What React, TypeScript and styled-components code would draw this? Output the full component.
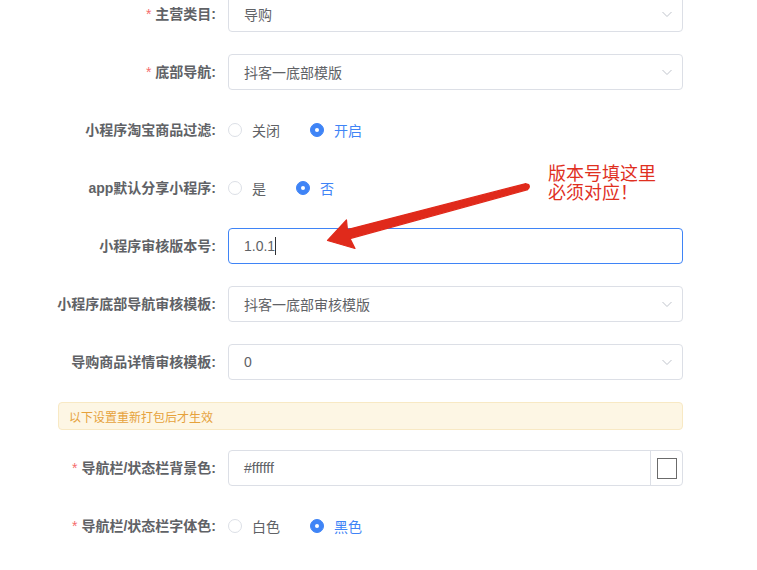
import React from "react";
import styled, { createGlobalStyle } from "styled-components";

const Global = createGlobalStyle`
  html, body { margin: 0; padding: 0; background: #fff; }
  body { font-family: "Liberation Sans", "Noto Sans CJK SC", sans-serif; }
  * { box-sizing: border-box; }
`;

const BLUE = "#3f84f6";

const Root = styled.div`
  position: relative;
  width: 757px;
  height: 570px;
  overflow: hidden;
  display: flow-root;
`;

const Form = styled.div`
  margin-top: -4px;
  padding-left: 58px;
  width: 683px;
`;

const FormItem = styled.div`
  display: flex;
  align-items: center;
  height: 36px;
  margin-bottom: 22px;
`;

const Label = styled.div`
  width: 170px;
  flex-shrink: 0;
  padding-right: 12px;
  display: flex;
  justify-content: flex-end;
  white-space: nowrap;
  font-size: 14px;
  font-weight: 600;
  color: #606266;
  line-height: 36px;
`;

const Star = styled.span`
  color: #f56c6c;
  margin-right: 4px;
  font-weight: 400;
`;

const Field = styled.div<{ $focus?: boolean }>`
  width: 455px;
  height: 36px;
  border: 1px solid ${(p) => (p.$focus ? BLUE : "#dcdfe6")};
  border-radius: 4px;
  display: flex;
  align-items: center;
  padding-left: 15px;
  font-size: 14px;
  color: #606266;
  background: #fff;
`;

const FieldText = styled.span`
  flex: 1;
  white-space: nowrap;
  margin-top: -1px;
`;

const Chevron = styled.svg`
  width: 12px;
  height: 12px;
  margin-right: 9px;
`;

const Caret = styled.span`
  display: inline-block;
  width: 1px;
  height: 18px;
  background: #303133;
  vertical-align: -4px;
`;

const Append = styled.div`
  width: 32px;
  height: 100%;
  border-left: 1px solid #dcdfe6;
  display: flex;
  align-items: center;
  justify-content: center;
`;

const Swatch = styled.div`
  width: 20px;
  height: 21px;
  border: 1px solid #6b6b6b;
  background: #ffffff;
`;

const RadioGroup = styled.div`
  display: flex;
  align-items: center;
  height: 36px;
`;

const RadioItem = styled.label<{ $checked?: boolean }>`
  display: flex;
  align-items: center;
  margin-right: 30px;
  font-size: 14px;
  color: ${(p) => (p.$checked ? BLUE : "#606266")};
`;

const RadioCircle = styled.span<{ $checked?: boolean }>`
  width: 14px;
  height: 14px;
  border-radius: 50%;
  border: 1px solid ${(p) => (p.$checked ? BLUE : "#dcdfe6")};
  background: ${(p) => (p.$checked ? BLUE : "#fff")};
  display: flex;
  align-items: center;
  justify-content: center;
  margin-right: 10px;
  &::after {
    content: "";
    width: 4px;
    height: 4px;
    border-radius: 50%;
    background: #fff;
    display: ${(p) => (p.$checked ? "block" : "none")};
  }
`;

const Alert = styled.div`
  width: 625px;
  height: 28px;
  margin-bottom: 20px;
  background: #fdf6e4;
  border: 1px solid #f8e9c4;
  border-radius: 4px;
  color: #e6a23c;
  font-size: 12px;
  display: flex;
  align-items: center;
  padding-left: 10px;
`;

const Note = styled.div`
  position: absolute;
  left: 548px;
  top: 163px;
  font-size: 18px;
  line-height: 19px;
  color: #e0301f;
  font-family: "Noto Sans CJK SC", sans-serif;
`;

const ArrowSvg = styled.svg`
  position: absolute;
  left: 0;
  top: 0;
  pointer-events: none;
`;

const ChevronIcon = () => (
  <Chevron viewBox="0 0 12 12">
    <path d="M1.5 4 L6 8.5 L10.5 4" fill="none" stroke="#c0c4cc" strokeWidth="1" />
  </Chevron>
);

const Select = ({ value }: { value: string }) => (
  <Field>
    <FieldText>{value}</FieldText>
    <ChevronIcon />
  </Field>
);

const Radios = ({ options, checked }: { options: string[]; checked: number }) => (
  <RadioGroup>
    {options.map((o, i) => (
      <RadioItem key={o} $checked={i === checked}>
        <RadioCircle $checked={i === checked} />
        {o}
      </RadioItem>
    ))}
  </RadioGroup>
);

const ItemLabel = ({ text, required }: { text: string; required?: boolean }) => (
  <Label>
    {required && <Star>*</Star>}
    {text}
  </Label>
);

export default function App() {
  return (
    <Root>
      <Global />
      <Form>
        <FormItem>
          <ItemLabel required text="主营类目:" />
          <Select value="导购" />
        </FormItem>
        <FormItem>
          <ItemLabel required text="底部导航:" />
          <Select value="抖客一底部模版" />
        </FormItem>
        <FormItem>
          <ItemLabel text="小程序淘宝商品过滤:" />
          <Radios options={["关闭", "开启"]} checked={1} />
        </FormItem>
        <FormItem>
          <ItemLabel text="app默认分享小程序:" />
          <Radios options={["是", "否"]} checked={1} />
        </FormItem>
        <FormItem>
          <ItemLabel text="小程序审核版本号:" />
          <Field $focus>
            <FieldText>
              1.0.1
              <Caret />
            </FieldText>
          </Field>
        </FormItem>
        <FormItem>
          <ItemLabel text="小程序底部导航审核模板:" />
          <Select value="抖客一底部审核模版" />
        </FormItem>
        <FormItem>
          <ItemLabel text="导购商品详情审核模板:" />
          <Select value="0" />
        </FormItem>
        <Alert>以下设置重新打包后才生效</Alert>
        <FormItem>
          <ItemLabel required text="导航栏/状态栏背景色:" />
          <Field>
            <FieldText>#ffffff</FieldText>
            <Append>
              <Swatch />
            </Append>
          </Field>
        </FormItem>
        <FormItem>
          <ItemLabel required text="导航栏/状态栏字体色:" />
          <Radios options={["白色", "黑色"]} checked={1} />
        </FormItem>
      </Form>
      <Note>
        版本号填这里
        <br />
        必须对应！
      </Note>
      <ArrowSvg width="757" height="570" viewBox="0 0 757 570">
        <polygon
          points="327.5,240.5 346.5,220 347.4,229.6 526,183.6 527.8,189.6 350,238.6 355,248.5"
          fill="#e02a1b"
          stroke="#e02a1b"
          strokeWidth="1.2"
          strokeLinejoin="round"
        />
        <circle cx="526.9" cy="186.6" r="3" fill="#e02a1b" />
      </ArrowSvg>
    </Root>
  );
}
